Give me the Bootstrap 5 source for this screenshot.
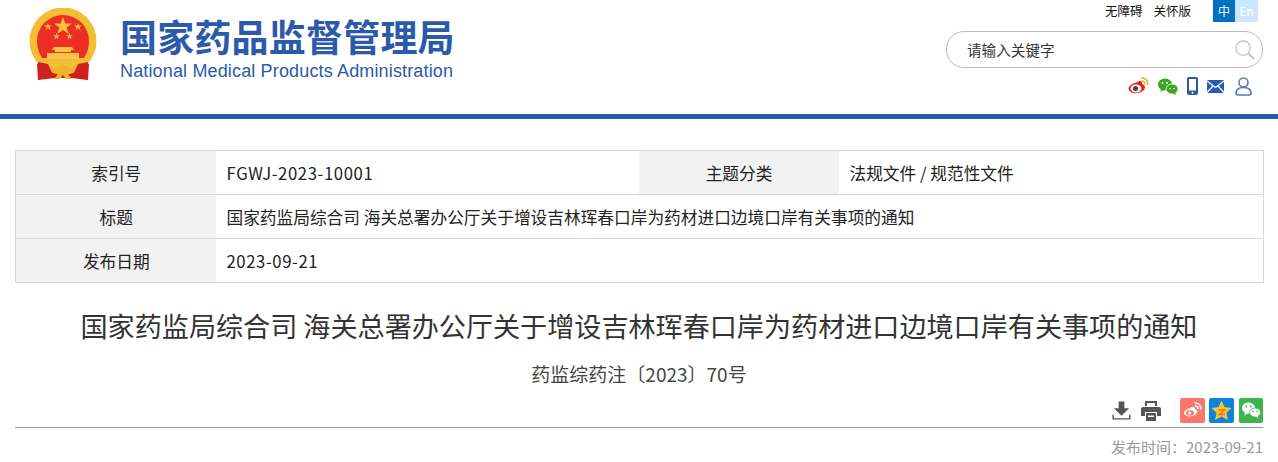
<!DOCTYPE html>
<html lang="zh-CN">
<head>
  <meta charset="UTF-8">
  <title>国家药品监督管理局</title>
  <meta name="viewport" content="width=device-width, initial-scale=1">
  <link href="https://cdn.jsdelivr.net/npm/bootstrap@5.3.3/dist/css/bootstrap.min.css" rel="stylesheet">
  <style>
    body { font-family: "Noto Sans CJK SC", "Liberation Sans", sans-serif; color: #222; overflow: hidden; }
    .site-head { height: 119px; border-bottom: 5px solid #2b5aab; padding: 0 15px 0 28px; }
    .emblem { width: 70px; height: 72px; margin-top: 8px; margin-right: 22px; }
    .brand-cn { font-size: 37px; line-height: 44px; font-weight: 700; color: #2b5aab; margin-top: 14px; letter-spacing: .2px; white-space: nowrap; }
    .brand-en { font-family: "Liberation Sans", sans-serif; font-size: 18px; line-height: 20px; color: #2b5aab; margin-top: 3px; letter-spacing: .15px; white-space: nowrap; }
    .head-right { width: 317px; }
    .top-links { height: 22px; font-size: 12.5px; line-height: 22px; padding-right: 5px; }
    .top-links a { color: #111; text-decoration: none; margin-right: 11px; }
    .top-links a.last-link { margin-right: 22px; }
    .lang-btn { width: 22px; height: 22px; text-align: center; color: #fff; background: #0070c0; font-size: 12px; }
    .lang-en { width: 23px; background: #cce6ff; }
    .search-box { height: 37px; margin-top: 9px; border: 1px solid #bbb; border-radius: 18px; padding: 0 7px 0 20px; font-size: 14.6px; color: #333; }
    .icon-row { gap: 9px; margin-top: 8px; padding-right: 11px; height: 20px; }
    .icon-row svg:last-child { margin-left: 2px; }
    .info-wrap { padding: 31px 15px 0; }
    .info-table { width: 1248px; margin: 0; table-layout: fixed; border-color: #d9d9d9; font-size: 16.7px; color: #222; }
    .info-table td { height: 44px; padding: 0 10px 0 11px; vertical-align: middle; line-height: 22px; white-space: nowrap; border-left-width: 0; border-right-width: 0; }
    .info-table td:first-child { border-left-width: 1px; }
    .info-table td:last-child { border-right-width: 1px; }
    .info-table td.cell-label { background: #f2f2f2; text-align: center; }
    .latin-text { letter-spacing: .6px; }
    .doc-title { font-size: 27.1px; line-height: 36px; font-weight: 400; color: #333; margin: 25px 0 0; white-space: nowrap; }
    .doc-no { font-size: 19px; line-height: 26px; color: #444; margin-top: 17px; }
    .tool-row { height: 32px; margin: 9px 15px 0; padding-bottom: 4px; border-bottom: 1px solid #999; }
    .tool-glyph { margin-bottom: 2px; }
    .print-glyph { margin-left: 10px; margin-right: 19px; }
    .share-gap { margin-right: 4px; }
    .share-gap-b { margin-right: 5px; }
    .pub-time { font-size: 15px; line-height: 20px; color: #999; margin: 9px 15px 0 0; }
  </style>
</head>
<body>

<header class="site-head d-flex justify-content-between">
  <div class="d-flex">
    <svg class="emblem" viewBox="0 0 70 72">
      <path d="M16 52 L9 56 L10 72 L27 70 L43 70 L60 72 L61 56 L54 52 Z" fill="#c9201c"/>
      <circle cx="35" cy="33" r="33.500" fill="#f3bd35"/>
      <path d="M9 33 A26 26 0 0 1 61 33 C61 40 59 45 56 50 H14 C11 45 9 40 9 33 Z" fill="#ee2e24"/>
      <path d="M10 54 L20 56 L25 67 L10 72 Z M60 54 L50 56 L45 67 L60 72 Z" fill="#cf221e"/>
      <path d="M35 9 l2.300 6.400 h6.800 l-5.500 4.100 2.100 6.500 -5.700-4 -5.700 4 2.100-6.500 -5.500-4.100 h6.800 Z" fill="#f8c53a"/>
      <path d="M20 15 l1 2.600 h2.800 l-2.200 1.700 .8 2.700 -2.400-1.700 -2.400 1.700 .8-2.700 -2.200-1.700 h2.800 Z M50 15 l1 2.600 h2.800 l-2.200 1.700 .8 2.700 -2.400-1.700 -2.400 1.700 .8-2.700 -2.200-1.700 h2.800 Z M28.500 25 l.9 2.300 h2.500 l-2 1.500 .7 2.400 -2.100-1.500 -2.100 1.500 .7-2.400 -2-1.500 h2.500 Z M41.500 25 l.9 2.300 h2.500 l-2 1.500 .7 2.400 -2.100-1.500 -2.100 1.500 .7-2.400 -2-1.500 h2.500 Z" fill="#f6c03a"/>
      <path d="M26 39 h18 l2 3 h-3 v2 h-16 v-2 h-3 Z M19 45 h32 v6 h-32 Z" fill="#f5c544"/>
      <path d="M22 58 q4 4 8 1 q5-3 10 0 q4 3 8-1 l-3 6 l-6 1 l5 6 h-6 l-3-4 l-3 4 h-6 l5-6 l-6-1 Z" fill="#f0b42c"/>
    </svg>
    <div>
      <div class="brand-cn">国家药品监督管理局</div>
      <div class="brand-en">National Medical Products Administration</div>
    </div>
  </div>
  <div class="head-right">
    <div class="top-links d-flex justify-content-end">
      <a href="#">无障碍</a>
      <a href="#" class="last-link">关怀版</a>
      <div class="lang-btn">中</div>
      <div class="lang-btn lang-en">En</div>
    </div>
    <div class="search-box d-flex align-items-center justify-content-between">
      <span>请输入关键字</span>
      <svg width="20" height="20" viewBox="0 0 21 21" fill="none" stroke="#c8c8c8">
        <circle cx="8.500" cy="8.500" r="7.500" stroke-width="1.500"/>
        <path d="M14 14 L20 20" stroke-width="2.200"/>
      </svg>
    </div>
    <div class="icon-row d-flex justify-content-end align-items-center">
      <svg width="21" height="18" viewBox="0 0 21 18">
        <path d="M8.500 5.500 C12 3 14.500 3.500 14 7 C18 8 18 12 14 14.500 C9 17.500 1.500 16.500 .6 12 C.2 9.500 4 6.500 8.500 5.500 Z" fill="#e2231a"/>
        <ellipse cx="8" cy="11.500" rx="5.500" ry="4" fill="#f4f4f4"/>
        <circle cx="7.500" cy="11.500" r="2.500" fill="#444"/>
        <path d="M13 1 C17 .5 20.500 3.500 19.500 8 M13.500 4 C15.500 3.800 17.200 5.200 16.600 7.500" fill="none" stroke="#eda92c" stroke-width="1.500"/>
      </svg>
      <svg width="20" height="17" viewBox="0 0 20 17">
        <ellipse cx="7" cy="6.500" rx="7" ry="6" fill="#3da51d"/>
        <path d="M3 10 L2.500 14 L7 11 Z" fill="#3da51d"/>
        <ellipse cx="14" cy="11" rx="6" ry="5" fill="#3da51d" stroke="#fff" stroke-width=".8"/>
        <path d="M17 14 L18 17 L14 15 Z" fill="#3da51d"/>
        <circle cx="4.500" cy="5" r="1" fill="#fff"/><circle cx="9" cy="5" r="1" fill="#fff"/>
        <circle cx="12" cy="10.500" r=".8" fill="#fff"/><circle cx="16" cy="10.500" r=".8" fill="#fff"/>
      </svg>
      <svg width="11" height="18" viewBox="0 0 11 18">
        <rect width="11" height="18" rx="2" fill="#2b5aab"/>
        <rect x="2" y="2" width="7" height="11.500" fill="#fff"/>
        <circle cx="5.500" cy="15.700" r="1" fill="#fff"/>
      </svg>
      <svg width="17" height="13" viewBox="0 0 17 13">
        <rect width="17" height="13" rx="1" fill="#2b5aab"/>
        <path d="M0 1 L8.500 7.500 L17 1 M0 12.500 L6 6 M17 12.500 L11 6" fill="none" stroke="#fff" stroke-width="1.200"/>
      </svg>
      <svg width="17" height="19" viewBox="0 0 17 19" fill="none" stroke="#5a76b8" stroke-width="1.600">
        <circle cx="8.500" cy="5.500" r="4.500"/>
        <path d="M8.500 10.500 C3 10.500 1 13 1 16 C1 17.500 2 18 3 18 H14 C15 18 16 17.500 16 16 C16 13 14 10.500 8.500 10.500 Z"/>
      </svg>
    </div>
  </div>
</header>

<div class="info-wrap">
  <table class="table table-bordered info-table">
    <colgroup>
      <col style="width:200px"><col style="width:423px"><col style="width:200px"><col style="width:425px">
    </colgroup>
    <tbody>
      <tr>
        <td class="cell-label">索引号</td>
        <td class="latin-text">FGWJ-2023-10001</td>
        <td class="cell-label">主题分类</td>
        <td>法规文件 / 规范性文件</td>
      </tr>
      <tr>
        <td class="cell-label">标题</td>
        <td colspan="3">国家药监局综合司 海关总署办公厅关于增设吉林珲春口岸为药材进口边境口岸有关事项的通知</td>
      </tr>
      <tr>
        <td class="cell-label">发布日期</td>
        <td colspan="3" class="latin-text">2023-09-21</td>
      </tr>
    </tbody>
  </table>
</div>

<h1 class="doc-title text-center">国家药监局综合司 海关总署办公厅关于增设吉林珲春口岸为药材进口边境口岸有关事项的通知</h1>
<div class="doc-no text-center">药监综药注〔2023〕70号</div>

<div class="tool-row d-flex justify-content-end align-items-end">
  <svg class="tool-glyph" width="19" height="20" viewBox="0 0 20 20" fill="#555">
    <path d="M7 0 H13 V7 H18 L10 15 L2 7 H7 Z"/>
    <path d="M.5 14 V19 H19.500 V14 H18 V17.500 H2 V14 Z"/>
  </svg>
  <svg class="tool-glyph print-glyph" width="20" height="20" viewBox="0 0 20 20" fill="#555">
    <path d="M4 0 H16 V5 H14 V2 H6 V5 H4 Z"/>
    <path d="M2 6 H18 Q20 6 20 8 V15 H16 V11 H4 V15 H0 V8 Q0 6 2 6 Z"/>
    <path d="M5 12 H15 V20 H5 Z M7 14.500 V16 H13 V14.500 Z"/>
  </svg>
  <svg class="share-gap" width="25" height="25" viewBox="0 0 25 25">
    <rect width="25" height="25" rx="2" fill="#f8766a"/>
    <path d="M10 10 C13 8 15 8.500 14.800 11 C18 12 18 15 15 17 C11 19.500 4.500 18.500 4 15 C3.800 13.500 6.500 11 10 10 Z" fill="#fff"/>
    <ellipse cx="10" cy="15" rx="4" ry="2.800" fill="#f8766a"/>
    <circle cx="9.700" cy="15" r="1.500" fill="#fff"/>
    <path d="M14.500 5 C18.500 4.500 21.500 7.500 20.500 11.500 M15 8 C17 7.800 18.200 9 17.800 11" fill="none" stroke="#fff" stroke-width="1.500"/>
  </svg>
  <svg class="share-gap-b" width="25" height="25" viewBox="0 0 25 25">
    <rect width="25" height="25" rx="2" fill="#0b84e0"/>
    <path d="M12.500 2.500 L15.500 9 L22.500 10 L17.500 14.800 L19 22 L12.500 18.500 L6 22 L7.500 14.800 L2.500 10 L9.500 9 Z" fill="#f7c32e"/>
    <path d="M9.500 12 H15.500 L10.500 16.500 H16" fill="none" stroke="#e2761b" stroke-width="1.500"/>
  </svg>
  <svg width="24" height="25" viewBox="0 0 24 25">
    <rect width="24" height="25" rx="2" fill="#3cb64a"/>
    <ellipse cx="9.500" cy="10" rx="6.500" ry="5.500" fill="#fff"/>
    <path d="M6 14 L5.500 17.500 L9.500 15 Z" fill="#fff"/>
    <ellipse cx="16" cy="14.500" rx="5.500" ry="4.500" fill="#fff" stroke="#3cb64a" stroke-width=".8"/>
    <path d="M18.500 17.500 L19.500 20 L16 18.500 Z" fill="#fff"/>
    <circle cx="7.300" cy="8.500" r="1" fill="#3cb64a"/><circle cx="11.800" cy="8.500" r="1" fill="#3cb64a"/>
    <circle cx="14" cy="13.500" r=".8" fill="#3cb64a"/><circle cx="18" cy="13.500" r=".8" fill="#3cb64a"/>
  </svg>
</div>
<div class="pub-time text-end">发布时间：2023-09-21</div>

<script src="https://cdn.jsdelivr.net/npm/bootstrap@5.3.3/dist/js/bootstrap.bundle.min.js"></script>
</body>
</html>
